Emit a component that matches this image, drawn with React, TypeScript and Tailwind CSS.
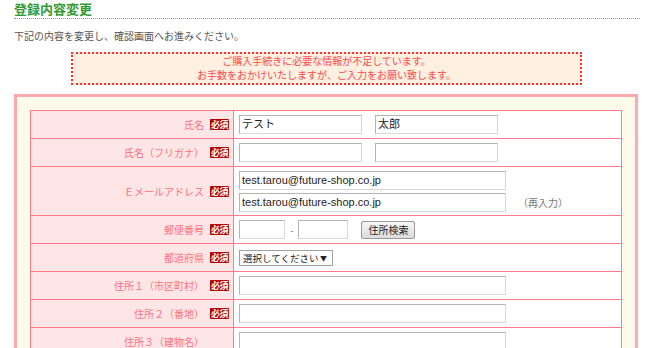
import React from "react";

const font = '"Noto Sans CJK JP", "Noto Sans", "Liberation Sans", sans-serif';
const inputFont = '"Liberation Sans", "Noto Sans CJK JP", sans-serif';

function Badge() {
  return (
    <span className="ml-[6px] inline-flex h-[11px] w-[19px] items-center justify-center rounded-[1px] bg-[#b30000] text-[9px] font-bold leading-none tracking-[-0.5px] text-white">
      必須
    </span>
  );
}

function Label({ text, required = true }: { text: string; required?: boolean }) {
  return (
    <div className="flex w-[203px] shrink-0 items-center justify-end border-r border-[#ff7a8c] bg-[#ffe6e6] bg-[radial-gradient(circle,#fad2d2_0.5px,transparent_0.7px)] bg-[length:4px_4px] pr-[4px] text-[10px] text-[#ff6f80]">
      <span>{text}</span>
      {required ? <Badge /> : <span className="ml-[6px] w-[19px]" />}
    </div>
  );
}

function Input({ value = "", w }: { value?: string; w: string }) {
  return (
    <div
      className={`flex h-[19px] items-center border border-[#b4b4b4] border-r-[#d8d8d8] border-b-[#d8d8d8] bg-white pl-[2px] text-[11px] text-[#222] ${w}`}
      style={{ fontFamily: inputFont }}
    >
      {value}
    </div>
  );
}

function Row({ label, required, children, h = "h-[28px]" }: { label: string; required?: boolean; children: React.ReactNode; h?: string }) {
  return (
    <div className={`flex border-b border-[#ff7a8c] ${h}`}>
      <Label text={label} required={required} />
      <div className="flex flex-1 items-center bg-white pl-[5px]">{children}</div>
    </div>
  );
}

export default function App() {
  return (
    <div className="h-[348px] w-[645px] overflow-hidden bg-white pl-[14px] pr-[5px]" style={{ fontFamily: font }}>
      <h2 className="border-b border-dotted border-[#66bb66] pt-[1px] pb-[1px] text-[13px] font-bold leading-[16px] text-[#339933]">
        登録内容変更
      </h2>
      <p className="mt-[10px] text-[10px] leading-[14px] text-[#555]">下記の内容を変更し、確認画面へお進みください。</p>

      <div className="ml-[57px] mt-[9px] h-[33px] w-[511px] border-2 border-dotted border-[#ff2a2a] bg-[#fff0e2] text-center text-[10px] leading-[14px] text-[#ff4a4a]">
        <p>ご購入手続きに必要な情報が不足しています。</p>
        <p>お手数をおかけいたしますが、ご入力をお願い致します。</p>
      </div>

      <div className="mt-[9px] w-[624px] border-[3px] border-[#ffaaaa] bg-[#fffbea] px-[13px] pt-[13px]">
        <div className="border-x border-t border-[#ff7a8c]">
          <Row label="氏名">
            <Input value="テスト" w="w-[123px]" />
            <div className="w-[13px]" />
            <Input value="太郎" w="w-[123px]" />
          </Row>
          <Row label="氏名（フリガナ）">
            <Input w="w-[123px]" />
            <div className="w-[13px]" />
            <Input w="w-[123px]" />
          </Row>
          <Row label="Ｅメールアドレス" h="h-[49px]">
            <div className="flex flex-col gap-[3px]">
              <Input value="test.tarou@future-shop.co.jp" w="w-[267px]" />
              <div className="flex items-center">
                <Input value="test.tarou@future-shop.co.jp" w="w-[267px]" />
                <span className="ml-[12px] text-[10px] text-[#777]">（再入力）</span>
              </div>
            </div>
          </Row>
          <Row label="郵便番号">
            <Input w="w-[46px]" />
            <span className="mx-[5px] text-[10px] text-[#777]">-</span>
            <Input w="w-[50px]" />
            <button className="ml-[13px] h-[18px] w-[54px] rounded-[2px] border border-[#999] bg-gradient-to-b from-[#f6f6f6] to-[#dcdcdc] text-[10px] leading-[16px] text-[#222]">
              住所検索
            </button>
          </Row>
          <Row label="都道府県">
            <div className="flex h-[16px] w-[94px] items-center justify-between whitespace-nowrap border border-[#a0a0a0] bg-white pl-[3px] pr-[5px] text-[9.5px] leading-[14px] text-[#222]">
              <span>選択してください</span>
              <span className="text-[7px]">▼</span>
            </div>
          </Row>
          <Row label="住所１（市区町村）">
            <Input w="w-[267px]" />
          </Row>
          <Row label="住所２（番地）">
            <Input w="w-[267px]" />
          </Row>
          <Row label="住所３（建物名）" required={false}>
            <Input w="w-[267px]" />
          </Row>
        </div>
      </div>
    </div>
  );
}
